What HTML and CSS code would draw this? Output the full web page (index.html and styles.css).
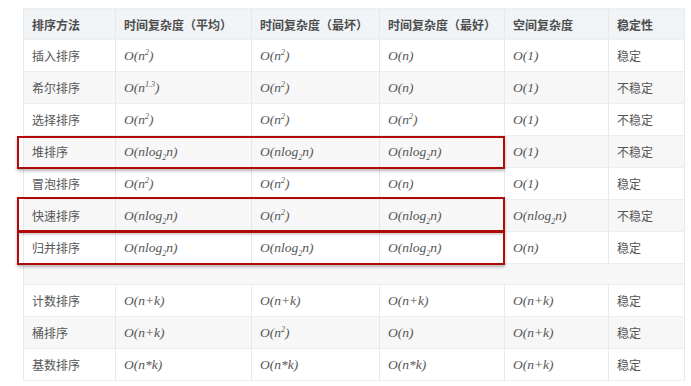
FILE: index.html
```html
<!DOCTYPE html>
<html lang="zh">
<head>
<meta charset="utf-8">
<title>排序算法复杂度</title>
<link rel="stylesheet" href="styles.css">
</head>
<body>
<div class="wrap">
  <table class="sort-table">
    <colgroup>
      <col class="c1"><col class="c2"><col class="c3"><col class="c4"><col class="c5"><col class="c6">
    </colgroup>
    <thead>
      <tr><th>排序方法</th><th>时间复杂度（平均）</th><th>时间复杂度（最坏）</th><th>时间复杂度（最好）</th><th>空间复杂度</th><th>稳定性</th></tr>
    </thead>
    <tbody>
      <tr><td>插入排序</td><td class="m">O(n<sup>2</sup>)</td><td class="m">O(n<sup>2</sup>)</td><td class="m">O(n)</td><td class="m">O(1)</td><td>稳定</td></tr>
      <tr><td>希尔排序</td><td class="m">O(n<sup>1.3</sup>)</td><td class="m">O(n<sup>2</sup>)</td><td class="m">O(n)</td><td class="m">O(1)</td><td>不稳定</td></tr>
      <tr><td>选择排序</td><td class="m">O(n<sup>2</sup>)</td><td class="m">O(n<sup>2</sup>)</td><td class="m">O(n<sup>2</sup>)</td><td class="m">O(1)</td><td>不稳定</td></tr>
      <tr><td>堆排序</td><td class="m">O(nlog<sub>2</sub>n)</td><td class="m">O(nlog<sub>2</sub>n)</td><td class="m">O(nlog<sub>2</sub>n)</td><td class="m">O(1)</td><td>不稳定</td></tr>
      <tr><td>冒泡排序</td><td class="m">O(n<sup>2</sup>)</td><td class="m">O(n<sup>2</sup>)</td><td class="m">O(n)</td><td class="m">O(1)</td><td>稳定</td></tr>
      <tr><td>快速排序</td><td class="m">O(nlog<sub>2</sub>n)</td><td class="m">O(n<sup>2</sup>)</td><td class="m">O(nlog<sub>2</sub>n)</td><td class="m">O(nlog<sub>2</sub>n)</td><td>不稳定</td></tr>
      <tr><td>归并排序</td><td class="m">O(nlog<sub>2</sub>n)</td><td class="m">O(nlog<sub>2</sub>n)</td><td class="m">O(nlog<sub>2</sub>n)</td><td class="m">O(n)</td><td>稳定</td></tr>
      <tr class="gap"><td colspan="6"></td></tr>
      <tr><td>计数排序</td><td class="m">O(n+k)</td><td class="m">O(n+k)</td><td class="m">O(n+k)</td><td class="m">O(n+k)</td><td>稳定</td></tr>
      <tr><td>桶排序</td><td class="m">O(n+k)</td><td class="m">O(n<sup>2</sup>)</td><td class="m">O(n)</td><td class="m">O(n+k)</td><td>稳定</td></tr>
      <tr><td>基数排序</td><td class="m">O(n*k)</td><td class="m">O(n*k)</td><td class="m">O(n*k)</td><td class="m">O(n+k)</td><td>稳定</td></tr>
    </tbody>
  </table>
  <div class="mark mark-heap"></div>
  <div class="mark mark-quick"></div>
  <div class="mark mark-merge"></div>
</div>
</body>
</html>
```

FILE: styles.css
```css
html, body {
  margin: 0;
  padding: 0;
  background: #ffffff;
}

.wrap {
  position: relative;
  width: 661px;
  margin: 8px 0 0 23px;
}

.sort-table {
  border-collapse: collapse;
  table-layout: fixed;
  width: 661px;
  font-family: "Noto Sans CJK SC", "Noto Sans", sans-serif;
  font-size: 12px;
  color: #555555;
  border: 1px solid #e6e6e6;
}

.c1 { width: 92px; }
.c2 { width: 136px; }
.c3 { width: 128px; }
.c4 { width: 125px; }
.c5 { width: 104px; }
.c6 { width: 76px; }

.sort-table th,
.sort-table td {
  text-align: left;
  padding: 0 8px;
  border-left: 1px solid #e8e8e8;
  border-right: 1px solid #e8e8e8;
  border-top: 1px solid #eeeeee;
  border-bottom: 1px solid #eeeeee;
  white-space: nowrap;
  vertical-align: middle;
}

.sort-table th {
  height: 30px;
  background: #f1f4f7;
  font-weight: 600;
  color: #4d4d4d;
}

.sort-table td {
  height: 31px;
}

.sort-table tbody tr:nth-child(even) td {
  background: #f7f7f7;
}

.sort-table tr.gap td {
  height: 20px;
  background: #f7f7f7;
}

.sort-table td.m {
  font-family: "Liberation Serif", "Times New Roman", serif;
  font-style: italic;
  font-size: 13.5px;
  color: #555555;
}

.sort-table sup,
.sort-table sub {
  font-size: 8px;
  line-height: 0;
}

.mark {
  position: absolute;
  left: -6px;
  width: 484px;
  border: 2px solid #b20a0a;
  box-shadow: 0 2px 3px rgba(0, 0, 0, 0.28);
  pointer-events: none;
}

.mark-heap {
  top: 128px;
  height: 29px;
}

.mark-quick {
  top: 189px;
  height: 31px;
}

.mark-merge {
  top: 223px;
  height: 30px;
}
```
